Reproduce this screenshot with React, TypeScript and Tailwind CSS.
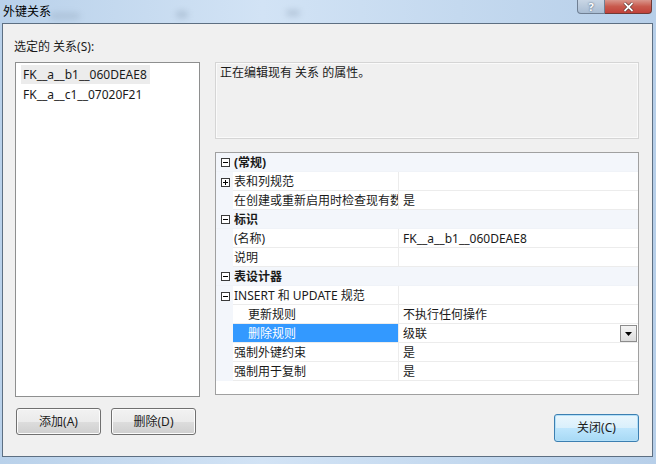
import React from 'react';

type Row =
  | { kind: 'cat'; label: string }
  | {
      kind: 'prop';
      label: string;
      value?: string;
      expander?: 'plus' | 'minus';
      indent?: boolean;
      selected?: boolean;
      dropdown?: boolean;
    };

const rows: Row[] = [
  { kind: 'cat', label: '(常规)' },
  { kind: 'prop', label: '表和列规范', expander: 'plus' },
  { kind: 'prop', label: '在创建或重新启用时检查现有数据', value: '是' },
  { kind: 'cat', label: '标识' },
  { kind: 'prop', label: '(名称)', value: 'FK__a__b1__060DEAE8' },
  { kind: 'prop', label: '说明' },
  { kind: 'cat', label: '表设计器' },
  { kind: 'prop', label: 'INSERT 和 UPDATE 规范', expander: 'minus' },
  { kind: 'prop', label: '更新规则', value: '不执行任何操作', indent: true },
  { kind: 'prop', label: '删除规则', value: '级联', indent: true, selected: true, dropdown: true },
  { kind: 'prop', label: '强制外键约束', value: '是' },
  { kind: 'prop', label: '强制用于复制', value: '是' },
];

function Expander({ open }: { open: boolean }) {
  return (
    <svg width="9" height="9" viewBox="0 0 9 9" className="block">
      <rect x="0.5" y="0.5" width="8" height="8" fill="white" stroke="#3a3a3a" />
      <line x1="2" y1="4.5" x2="7" y2="4.5" stroke="#000" />
      {!open && <line x1="4.5" y1="2" x2="4.5" y2="7" stroke="#000" />}
    </svg>
  );
}

function Button({ label, primary, className }: { label: string; primary?: boolean; className?: string }) {
  return (
    <div
      className={`flex items-center justify-center rounded-[3px] border text-[12px] text-[#1b1b1b] ${
        primary
          ? 'border-[#3c7fb1] bg-[linear-gradient(#eaf6fd_0%,#d9f0fc_50%,#bee6fd_51%,#a7d9f5_100%)] shadow-[inset_0_0_0_1px_#b3e0f9]'
          : 'border-[#707070] bg-[linear-gradient(#f2f2f2_0%,#ebebeb_50%,#dddddd_51%,#cfcfcf_100%)] shadow-[inset_0_0_0_1px_#fcfcfc]'
      } ${className ?? ''}`}
    >
      {label}
    </div>
  );
}

function PropertyGrid() {
  return (
    <div className="h-[243px] border border-[#a0a0a0] bg-white">
      {rows.map((r, i) =>
        r.kind === 'cat' ? (
          <div key={i} className="flex h-[19px] items-center border-b border-[#f0f3f8] bg-[#f3f6fb] pt-[1px]">
            <div className="flex w-[17px] justify-end pr-[3px]">
              <Expander open />
            </div>
            <span className="pl-[1px] font-bold">{r.label}</span>
          </div>
        ) : (
          <div key={i} className="flex h-[19px] items-stretch">
            <div className="flex w-[17px] items-center justify-end bg-[#f3f6fb] pr-[3px] pt-[1px]">
              {r.expander && <Expander open={r.expander === 'minus'} />}
            </div>
            <div
              className={`flex w-[165px] items-center overflow-hidden whitespace-nowrap border-b border-[#ececec] pt-[1px] ${
                r.indent ? 'pl-[15px]' : 'pl-[1px]'
              } ${r.selected ? 'border-[#3399ff] bg-[#3399ff] text-white' : ''}`}
            >
              {r.label}
            </div>
            <div className="flex flex-1 items-center border-b border-l border-[#ececec] pl-[4px] pr-[1px] pt-[1px]">
              <span className="flex-1 whitespace-nowrap">{r.value}</span>
              {r.dropdown && (
                <div className="flex h-[17px] w-[17px] items-center justify-center border border-[#8c8c8c] bg-[linear-gradient(#f4f4f4,#dcdcdc)]">
                  <svg width="7" height="4" viewBox="0 0 7 4">
                    <path d="M0 0h7L3.5 4z" fill="#000" />
                  </svg>
                </div>
              )}
            </div>
          </div>
        )
      )}
    </div>
  );
}

export default function App() {
  return (
    <div className="flex h-[464px] w-[656px] flex-col overflow-hidden bg-[linear-gradient(90deg,#b9d1ea,#d2e3f5_40%,#c4d9ef_70%,#b7cfe9)] font-['Noto_Sans','Noto_Sans_CJK_SC',sans-serif] text-[12px] text-[#1a1a1a]">
      {/* title bar */}
      <div className="relative h-[23px] shrink-0">
        <div className="absolute left-[50px] top-[13px] h-[6px] w-[30px] rounded-full bg-[#7f93a8] opacity-30 blur-[3px]" />
        <div className="absolute left-[176px] top-[11px] h-[7px] w-[12px] rounded-full bg-[#6d8299] opacity-30 blur-[3px]" />
        <div className="absolute left-[286px] top-[10px] h-[6px] w-[14px] rounded-full bg-[#6d8299] opacity-30 blur-[3px]" />
        <span className="absolute left-[3px] top-[3px] text-[12px] text-black">外键关系</span>
        <div className="absolute right-[4px] top-0 flex h-[14px]">
          <div className="flex w-[28px] items-center justify-center rounded-bl-[4px] border border-t-0 border-[#6f7f93] bg-[linear-gradient(#c9d6e5,#a9bdd3)] text-[11px] font-bold leading-none text-white [text-shadow:0_0_2px_#30445c]">
            ?
          </div>
          <div className="flex w-[47px] items-center justify-center rounded-br-[4px] border border-l-0 border-t-0 border-[#6f3a36] bg-[linear-gradient(#d9968c,#c85a4d_50%,#c1413a)]">
            <svg width="11" height="10" viewBox="0 0 11 10">
              <path d="M1.5 1l8 8M9.5 1l-8 8" stroke="#3a1a18" strokeWidth="3" />
              <path d="M1.5 1l8 8M9.5 1l-8 8" stroke="#fff" strokeWidth="1.8" />
            </svg>
          </div>
        </div>
      </div>

      {/* client area */}
      <div className="ml-[2px] mr-[3px] flex h-[434px] shrink-0 border border-[#5d6f82] bg-[#f0f0f0]">
        <div className="flex w-[197px] flex-col pl-[11px]">
          <div className="mt-[15px] h-[16px] leading-[16px]">选定的 关系(S):</div>
          <div className="ml-[1px] mt-[7px] h-[335px] w-[185px] border border-[#8e8f8f] bg-white pl-[5px] pt-[2px]">
            <div className="flex h-[19px] w-fit items-center bg-[#ececec] pl-[2px] pr-[3px] pt-[1px]">FK__a__b1__060DEAE8</div>
            <div className="flex h-[19px] items-center pl-[2px] pt-[2px]">FK__a__c1__07020F21</div>
          </div>
          <div className="ml-[2px] mt-[11px] flex gap-[10px]">
            <Button label="添加(A)" className="h-[27px] w-[85px]" />
            <Button label="删除(D)" className="h-[27px] w-[85px]" />
          </div>
        </div>
        <div className="ml-[15px] flex w-[424px] flex-col pt-[38px]">
          <div className="h-[77px] border border-[#d5d5d5] bg-[#f0f0f0] px-[4px] pt-[1px] shadow-[inset_0_0_0_1px_#fafafa]">
            正在编辑现有 关系 的属性。
          </div>
          <div className="mt-[13px]">
            <PropertyGrid />
          </div>
          <div className="mt-[19px] flex justify-end">
            <Button label="关闭(C)" primary className="h-[28px] w-[85px]" />
          </div>
        </div>
      </div>
    </div>
  );
}
